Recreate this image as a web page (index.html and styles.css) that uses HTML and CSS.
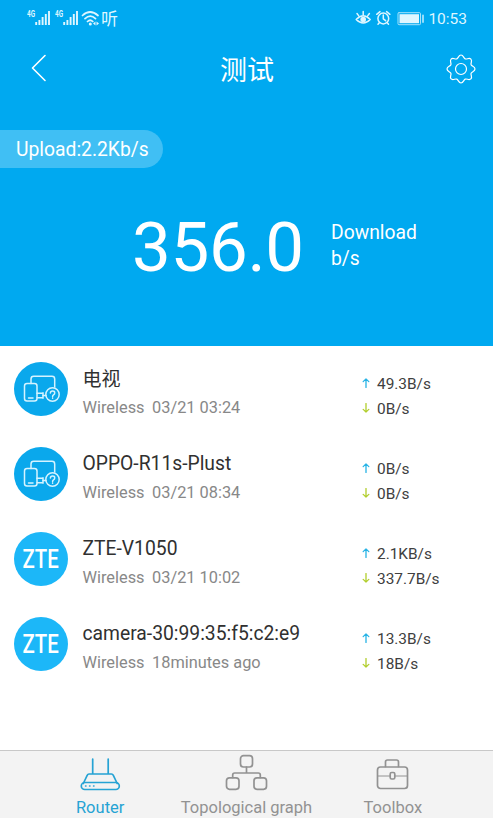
FILE: index.html
```html
<!DOCTYPE html>
<html lang="en">
<head>
<meta charset="utf-8">
<title>Router</title>
<link rel="stylesheet" href="styles.css">
</head>
<body>
<svg class="defs" width="0" height="0" aria-hidden="true">
  <symbol id="up" viewBox="0 0 8 10"><path d="M4 9.500V1M1.200 3.600L4 .9l2.800 2.700"/></symbol>
  <symbol id="down" viewBox="0 0 8 10"><path d="M4 .5V9M1.200 6.400L4 9.100l2.800-2.700"/></symbol>
  <symbol id="device" viewBox="0 0 54 54">
    <path d="M17 21.500V17q0-2.700 2.700-2.700H38q2.700 0 2.700 2.700v8"/>
    <rect x="10.500" y="21.500" width="12.500" height="17.500" rx="2.500"/>
    <path d="M14.500 36h4.500M23 31.300h6M23 35.800h6M29 30.800v5.500"/>
    <circle cx="38.500" cy="32.500" r="6.700"/>
    <path d="M29 33.500h3M36.400 31q.1-2.100 2.200-2.100t2.100 2q0 1.200-1.200 1.900-.9.600-.9 1.700M38.600 36v.2"/>
  </symbol>
</svg>
<div class="app">
  <header class="hero">
    <div class="status">
      <div class="status-left">
        <svg class="signals" width="74" height="20" viewBox="0 0 74 20">
          <g class="tiny"><text x="0" y="8" textLength="8" lengthAdjust="spacingAndGlyphs">4G</text><text x="28" y="8" textLength="8" lengthAdjust="spacingAndGlyphs">4G</text></g>
          <path class="bars" d="M9.200 16v-3M12.400 16v-5M15.600 16v-8M18.800 16v-11M22 16v-14M37.200 16v-3M40.400 16v-5M43.600 16v-8M46.800 16v-11M50 16v-14"/>
          <path class="wifi" d="M55.500 6.500q7.500-7 15.500 0M58 9.700q5.300-5 10.500 0M60.500 12.500q2.700-2.500 5.300 0"/>
          <circle class="solid" cx="63.300" cy="15" r="1.500"/>
          <path class="solid" d="M66 14.500l2.500-2v4zM72 14.500l-2.500-2v4z"/>
        </svg>
        <span class="listen">听</span>
      </div>
      <div class="status-right">
        <svg width="70" height="20" viewBox="0 0 70 20">
          <path class="eye" d="M1.200 10.500q7-7.500 14 0-7 7-14 0zM8.200 5.700V2.500M3.600 6.600L2 4.500M12.800 6.600l1.600-2.100"/>
          <circle class="solid" cx="8.200" cy="10.500" r="2.800"/>
          <circle class="eye" cx="28.300" cy="9.500" r="5.400"/>
          <path class="eye" d="M28.300 6v3.800l2.300 1.900M21.700 5.300L25 2.600M31.600 2.600l3.300 2.700M24.500 13.500l-1.500 1.700M32 13.500l1.500 1.700"/>
          <rect class="cell" x="43" y="3.700" width="22.500" height="12" rx="1"/>
          <rect class="solid" x="44.500" y="5.200" width="19.500" height="9"/>
          <path class="cap" d="M68 6.500v6.500"/>
        </svg>
        <span class="clock">10:53</span>
      </div>
    </div>
    <div class="nav">
      <svg class="back" width="18" height="30" viewBox="0 0 18 30"><path d="M15 2.500L2.500 15 15 27.500"/></svg>
      <h1>测试</h1>
      <svg width="30" height="30" viewBox="0 0 30 30"><path class="gear" d="M15 1C17.500 1 17.500 4.200 19.200 4.900C20.900 5.600 23.100 3.300 24.900 5.100C26.700 6.900 24.400 9.100 25.100 10.800C25.800 12.500 29 12.500 29 15C29 17.500 25.800 17.500 25.100 19.200C24.400 20.900 26.700 23.100 24.900 24.900C23.100 26.700 20.900 24.400 19.200 25.100C17.500 25.800 17.500 29 15 29C12.500 29 12.500 25.800 10.800 25.100C9.100 24.400 6.900 26.700 5.100 24.900C3.300 23.100 5.600 20.900 4.900 19.200C4.200 17.500 1 17.500 1 15C1 12.500 4.200 12.500 4.900 10.800C5.600 9.100 3.300 6.900 5.100 5.100C6.900 3.300 9.100 5.600 10.800 4.900C12.500 4.200 12.500 1 15 1Z"/><circle class="gear" cx="15" cy="15" r="5.500"/></svg>
    </div>
    <div class="upload"><span>Upload:2.2Kb/s</span></div>
    <div class="download">
      <span class="speed">356.0</span>
      <div class="unit"><div>Download</div><div>b/s</div></div>
    </div>
  </header>
  <main class="devices">
    <section class="device">
      <div class="avatar generic"><svg width="54" height="54"><use href="#device"/></svg></div>
      <div class="info"><div class="name cjk">电视</div><div class="meta"><span>Wireless</span><span>03/21 03:24</span></div></div>
      <div class="rates"><div class="up"><svg><use href="#up"/></svg><span>49.3B/s</span></div><div class="down"><svg><use href="#down"/></svg><span>0B/s</span></div></div>
    </section>
    <section class="device">
      <div class="avatar generic"><svg width="54" height="54"><use href="#device"/></svg></div>
      <div class="info"><div class="name">OPPO-R11s-Plust</div><div class="meta"><span>Wireless</span><span>03/21 08:34</span></div></div>
      <div class="rates"><div class="up"><svg><use href="#up"/></svg><span>0B/s</span></div><div class="down"><svg><use href="#down"/></svg><span>0B/s</span></div></div>
    </section>
    <section class="device">
      <div class="avatar brand"><span>ZTE</span></div>
      <div class="info"><div class="name">ZTE-V1050</div><div class="meta"><span>Wireless</span><span>03/21 10:02</span></div></div>
      <div class="rates"><div class="up"><svg><use href="#up"/></svg><span>2.1KB/s</span></div><div class="down"><svg><use href="#down"/></svg><span>337.7B/s</span></div></div>
    </section>
    <section class="device">
      <div class="avatar brand"><span>ZTE</span></div>
      <div class="info"><div class="name">camera-30:99:35:f5:c2:e9</div><div class="meta"><span>Wireless</span><span>18minutes ago</span></div></div>
      <div class="rates"><div class="up"><svg><use href="#up"/></svg><span>13.3B/s</span></div><div class="down"><svg><use href="#down"/></svg><span>18B/s</span></div></div>
    </section>
  </main>
  <nav class="tabs">
    <a class="tab active">
      <svg width="44" height="40" viewBox="0 0 44 40"><path d="M14.700 7v15M30.200 7v15M11 22h22.500q1.200 0 1.700 1.200l4 8.300M11 22q-1.200 0-1.700 1.200l-4 8.300"/><rect x="3.300" y="30.500" width="38" height="7" rx="3.500"/><path class="dots" d="M7.500 34h9"/></svg>
      <span>Router</span>
    </a>
    <a class="tab">
      <svg width="44" height="40" viewBox="0 0 44 40"><rect x="16.500" y="3.700" width="12" height="11.300" rx="3"/><rect x="2.500" y="25.800" width="12.500" height="11.500" rx="3"/><rect x="30" y="25.800" width="12.500" height="11.500" rx="3"/><path d="M22.500 15v6M8.700 25.500v-2.500q0-2 2-2h23.600q2 0 2 2v2.500"/></svg>
      <span>Topological graph</span>
    </a>
    <a class="tab">
      <svg width="44" height="40" viewBox="0 0 44 40"><rect x="6.500" y="15" width="30" height="21.500" rx="3"/><path d="M14.500 14.500V10q0-2 2-2h9q2 0 2 2v4.500"/><path class="thin" d="M7 24h12.500M24 24h12.500"/><rect x="19.200" y="20.500" width="4.600" height="6.500" rx="1.500"/></svg>
      <span>Toolbox</span>
    </a>
  </nav>
</div>
</body>
</html>
```
FILE: styles.css
```css
* { box-sizing: border-box; }
body {
  margin: 0;
  background: #fff;
  color: #303030;
  font-family: Roboto, "Noto Sans CJK SC", sans-serif;
}
svg { display: block; flex: none; fill: none; stroke-linecap: round; stroke-linejoin: round; }
.defs { position: absolute; }
.app { display: flex; flex-direction: column; width: 493px; height: 818px; overflow: hidden; }
.hero { height: 346px; background: #00a9f0; color: #fff; flex: none; }

.status { display: flex; justify-content: space-between; height: 37px; padding: 9px 26px 0 27px; color: #dff6ff; }
.status-left { display: flex; }
.signals text { fill: #dff6ff; }
.tiny text { font-size: 8.500px; font-weight: 700; }
.listen { font-family: "Noto Sans CJK SC", sans-serif; font-size: 17px; line-height: 18px; }
.bars { stroke: #dff6ff; stroke-width: 1.900; stroke-linecap: butt; }
.wifi { stroke: #dff6ff; stroke-width: 1.700; }
.solid { fill: #dff6ff; }
.eye { stroke: #dff6ff; stroke-width: 1.500; }
.cell { stroke: #a5e2fb; stroke-width: 1; }
.cap { stroke: #a5e2fb; stroke-width: 1.800; }
.status-right { display: flex; gap: 3px; }
.clock { font-size: 15.500px; line-height: 20px; }

.nav { display: flex; align-items: center; justify-content: space-between; height: 63px; padding: 0 17px 0 30px; }
.nav svg { stroke: #fff; stroke-width: 1.600; }
.nav .back { margin-bottom: 1px; }
.nav .gear { stroke-width: 1.200; }
.nav h1 { margin: 0; padding-top: 4px; font-size: 27px; font-weight: 400; line-height: 40px; }

.upload { display: flex; align-items: center; width: 163px; height: 38px; margin-top: 30px; padding: 1px 0 0 16px; border-radius: 0 19px 19px 0; background: #40bff4; font-size: 19.300px; white-space: nowrap; }
.download { display: flex; align-items: center; height: 90px; margin-top: 33px; padding-left: 132px; }
.speed { width: 199px; padding-top: 4px; font-size: 69px; letter-spacing: -.3px; line-height: 90px; }
.unit { font-size: 19.300px; line-height: 26px; }

.devices { flex: 1; }
.device { display: flex; align-items: center; height: 85px; padding-left: 14px; }
.avatar { display: flex; align-items: center; justify-content: center; width: 54px; height: 54px; border-radius: 50%; }
.generic { background: #0aa8ec; }
.generic svg { stroke: #d5f3ff; stroke-width: 1.500; }
.brand { background: #1cb7f8; color: #fff; font-size: 25.500px; font-weight: 500; }
.brand span { transform: scaleX(.8); }
.info { width: 294px; padding: 9px 0 0 14.500px; white-space: nowrap; }
.name { height: 29px; font-size: 19.300px; line-height: 29px; }
.cjk { padding-top: 1px; font-size: 19px; }
.meta { display: flex; gap: 7.500px; color: #888; font-size: 16.350px; line-height: 29px; }
.rates { padding-top: 17px; font-size: 15.400px; line-height: 25px; color: #404040; }
.rates div { display: flex; align-items: center; gap: 7px; }
.rates svg { width: 8px; height: 10px; margin-bottom: 3px; stroke-width: 1.300; }
.up svg { stroke: #27b3e5; }
.down svg { stroke: #b1ce2c; }

.tabs { display: flex; flex: none; height: 68px; padding: 0 27px; border-top: 1px solid #c8c8c8; background: #f3f3f3; }
.tab { display: flex; flex: 1; flex-direction: column; align-items: center; padding-top: 1px; color: #929292; font-size: 16.500px; line-height: 20px; white-space: nowrap; }
.tab svg { stroke: #929292; stroke-width: 1.700; }
.tab span { padding-top: 6px; }
.tab .thin { stroke-width: 1; }
.tab.active { color: #26a3d4; }
.tab.active svg { stroke: #26a3d4; }
.active .dots { stroke-width: 1.500; stroke-dasharray: .5 3.500; }
```
